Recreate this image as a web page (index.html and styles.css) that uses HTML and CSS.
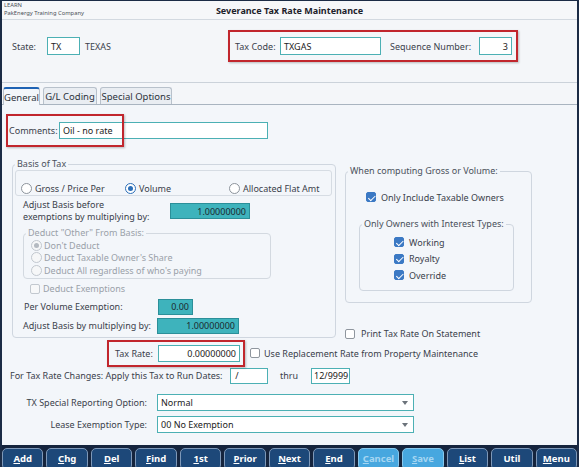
FILE: index.html
```html
<!DOCTYPE html>
<html>
<head>
<meta charset="utf-8">
<link rel="stylesheet" href="styles.css">
</head>
<body>
<div class="window">
  <header class="hdr">
    <div class="company"><div>LEARN</div><div>PakEnergy Training Company</div></div>
    <h1 class="title">Severance Tax Rate Maintenance</h1>
    <div></div>
  </header>

  <section class="keyrow">
    <div class="fg">
      <span class="lbl-state">State:</span>
      <span class="box w33">TX</span>
      <span class="state-name">TEXAS</span>
    </div>
    <div class="fg">
      <span class="lbl-code">Tax Code:</span>
      <span class="box w101">TXGAS</span>
      <span class="lbl-seq">Sequence Number:</span>
      <span class="box w33 num">3</span>
    </div>
  </section>

  <nav class="tabs">
    <span class="tab active w37">General</span>
    <span class="tab w54">G/L Coding</span>
    <span class="tab w72">Special Options</span>
  </nav>

  <main class="panel">
    <div class="row-comments">
      <span class="lbl-comments">Comments:</span>
      <span class="box w209">Oil - no rate</span>
    </div>

    <div class="cols">
      <fieldset class="basis">
        <legend>Basis of Tax</legend>
        <div class="radio-box">
          <span class="opt"><i class="radio"></i>Gross / Price Per</span>
          <span class="opt"><i class="radio on"></i>Volume</span>
          <span class="opt"><i class="radio"></i>Allocated Flat Amt</span>
        </div>
        <div class="adjust-row">
          <span class="lbl-adjust">Adjust Basis before<br>exemptions by multiplying by:</span>
          <span class="box teal w80 num">1.00000000</span>
        </div>
        <fieldset class="deduct">
          <legend>Deduct "Other" From Basis:</legend>
          <div class="dopt"><i class="radio dis on"></i>Don't Deduct</div>
          <div class="dopt"><i class="radio dis"></i>Deduct Taxable Owner's Share</div>
          <div class="dopt"><i class="radio dis"></i>Deduct All regardless of who's paying</div>
        </fieldset>
        <div class="exempt-row"><i class="chk dis"></i>Deduct Exemptions</div>
        <div class="per-row">
          <span class="lbl-per">Per Volume Exemption:</span>
          <span class="box teal w35 num">0.00</span>
        </div>
        <div class="adj2-row">
          <span class="lbl-per">Adjust Basis by multiplying by:</span>
          <span class="box teal w82 num">1.00000000</span>
        </div>
      </fieldset>

      <div class="right">
        <fieldset class="computing">
          <legend>When computing Gross or Volume:</legend>
          <div class="only-row"><i class="chk on"></i>Only Include Taxable Owners</div>
          <fieldset class="owners">
            <legend>Only Owners with Interest Types:</legend>
            <div class="orow"><i class="chk on"></i>Working</div>
            <div class="orow"><i class="chk on"></i>Royalty</div>
            <div class="orow"><i class="chk on"></i>Override</div>
          </fieldset>
        </fieldset>
        <div class="print-row"><i class="chk"></i>Print Tax Rate On Statement</div>
      </div>
    </div>

    <div class="rate-row">
      <span class="lbl-rate">Tax Rate:</span>
      <span class="box w82 num">0.00000000</span>
      <i class="chk gap"></i><span>Use Replacement Rate from Property Maintenance</span>
    </div>

    <div class="dates-row">
      <span class="lbl-dates">For Tax Rate Changes: Apply this Tax to Run Dates:</span>
      <span class="box w38">&nbsp;/</span>
      <span class="lbl-thru">thru</span>
      <span class="box w39">12/9999</span>
    </div>

    <div class="sel-row first">
      <span class="lbl-sel">TX Special Reporting Option:</span>
      <span class="box sel">Normal<i class="caret"></i></span>
    </div>
    <div class="sel-row">
      <span class="lbl-sel">Lease Exemption Type:</span>
      <span class="box sel">00 No Exemption<i class="caret"></i></span>
    </div>
  </main>

  <footer class="btnbar">
    <span class="btn"><u>A</u>dd</span>
    <span class="btn"><u>C</u>hg</span>
    <span class="btn"><u>D</u>el</span>
    <span class="btn"><u>F</u>ind</span>
    <span class="btn"><u>1</u>st</span>
    <span class="btn"><u>P</u>rior</span>
    <span class="btn"><u>N</u>ext</span>
    <span class="btn"><u>E</u>nd</span>
    <span class="btn off"><u>C</u>ancel</span>
    <span class="btn off"><u>S</u>ave</span>
    <span class="btn"><u>L</u>ist</span>
    <span class="btn">Util</span>
    <span class="btn"><u>M</u>enu</span>
  </footer>

  <div class="mark mark-code"></div>
  <div class="mark mark-comments"></div>
  <div class="mark mark-rate"></div>
</div>
</body>
</html>
```

FILE: styles.css
```css
* { box-sizing: border-box; }
html, body { margin: 0; padding: 0; }
body {
  width: 579px; height: 467px; overflow: hidden;
  font-family: "Noto Sans", "Segoe UI", sans-serif;
  font-size: 9px; color: #3a414b;
}
.window {
  position: relative;
  width: 579px; height: 467px;
  background: #1b2b45;
  padding: 1px 2px 0 2px;
  display: flex; flex-direction: column;
  overflow: hidden;
}

/* header */
.hdr {
  height: 19px; flex: none;
  background: #f6f7f9;
  border-bottom: 1px solid #d3d9e0;
  display: grid; grid-template-columns: 1fr auto 1fr; align-items: center;
}
.company { align-self: start; padding: 0 0 0 2px; font-size: 5.8px; line-height: 8px; color: #4a4f57; }
.title { margin: 0; font-size: 9px; font-weight: 700; color: #1d222b; }

/* key row */
.keyrow {
  height: 63px; flex: none;
  background: #f4f6f9;
  border-bottom: 1px solid #cbd2da;
  padding: 17px 0 0 10px;
  display: grid; grid-template-columns: 223px auto; align-items: start;
}
.fg { display: flex; align-items: center; height: 18px; }
.lbl-state { width: 35px; }
.state-name { margin-left: 5px; }
.lbl-code { width: 45px; }
.lbl-seq { margin-left: 9px; width: 89px; }

.box {
  height: 18px; flex: none;
  border: 1px solid #4cb0b4; background: #fff; color: #222;
  padding: 0 3px; display: flex; align-items: center;
  white-space: nowrap;
}
.num { justify-content: flex-end; }
.teal { background: #3eb3bc; border-color: #2b8f99; height: 16px; color: #1d2a30; }
.w33 { width: 33px; } .w35 { width: 35px; } .w38 { width: 38px; } .w39 { width: 39px; }
.w80 { width: 80px; } .w82 { width: 82px; } .w101 { width: 101px; } .w209 { width: 209px; }

/* tabs */
.tabs {
  height: 22px; flex: none;
  display: flex; gap: 3px; align-items: flex-end;
  padding: 0 0 0 1px;
  background: #f4f6f9;
  border-bottom: 1px solid #a9b4c0;
}
.tab {
  height: 17px; font-size: 9.5px; color: #2c323b;
  border: 1px solid #b8c1cb; border-bottom: none;
  border-radius: 3px 3px 0 0;
  background: #e9edf2;
  display: flex; align-items: center; justify-content: center;
}
.tab.active {
  height: 18px; margin-bottom: -1px;
  background: #f3f6fa;
  border-top: 2px solid #1f63b4;
}
.w37 { width: 37px; } .w54 { width: 54px; } .w72 { width: 72px; }

/* panel */
.panel { flex: 1; background: #f3f6fa; }
.row-comments { display: flex; align-items: center; margin-top: 17px; padding-left: 7px; }
.row-comments .box { height: 17px; }
.lbl-comments { width: 50px; }

.cols { display: flex; align-items: flex-start; margin-top: 19px; padding-left: 10px; }

fieldset {
  margin: 0; min-width: 0;
  border: 1px solid #cfd6df; border-radius: 4px;
  padding: 0 0 0 2px;
}
legend { padding: 0 2px; margin: 0; line-height: 12px; font-size: 9px; color: #4a515b; }

.basis { width: 324px; padding: 0 3px 3px 2px; }
.radio-box {
  height: 26px; border: 1px solid #d6dce3; border-radius: 3px;
  padding: 10px 0 0 5px;
  display: grid; grid-template-columns: 104px 104px auto; align-items: center;
}
.opt { display: flex; align-items: center; height: 13px; }

.radio {
  width: 11px; height: 11px; flex: none; border-radius: 50%;
  border: 1px solid #8d949c; background: #fff; margin-right: 3px;
  display: inline-flex; align-items: center; justify-content: center;
}
.radio.on { border-color: #2c6fb8; }
.radio.on::after { content: ""; width: 5px; height: 5px; border-radius: 50%; background: #2c6fb8; }
.radio.dis { border-color: #c2c8cf; background: #f6f7f8; margin-right: 2px; }
.radio.dis.on::after { background: #b4bac1; }

.adjust-row { display: flex; align-items: center; margin: 3px 0 0 8px; }
.lbl-adjust { width: 147px; line-height: 12px; }

.deduct { width: 248px; margin: 4px 0 0 8px; padding: 0 0 1px 2px; border-color: #d3d9e0; }
.deduct legend { color: #9aa1a9; }
.dopt { height: 12.5px; display: flex; align-items: center; margin-left: 5px; color: #9aa1a9; }

.exempt-row { height: 12px; display: flex; align-items: center; margin: 4px 0 0 15px; color: #9aa1a9; }

.per-row { display: flex; align-items: center; margin: 4px 0 0 9px; }
.adj2-row { display: flex; align-items: center; margin: 3px 0 0 8px; }
.lbl-per { width: 134px; }

.chk {
  width: 10px; height: 10px; flex: none;
  border: 1px solid #8f969e; border-radius: 2px; background: #fff;
  margin-right: 5px; position: relative;
}
.chk.dis { border-color: #c2c8cf; background: #f7f8f9; margin-right: 3px; }
.chk.on { background: #3b79c4; border-color: #3b79c4; }
.chk.on::after {
  content: ""; position: absolute; left: 2.5px; top: 0.5px;
  width: 3px; height: 5.5px;
  border: solid #fff; border-width: 0 1.5px 1.5px 0;
  transform: rotate(45deg);
}

.right { margin-left: 9px; width: 187px; display: flex; flex-direction: column; }
.computing { margin-top: 7px; padding: 0 0 11px 2px; }
.only-row { height: 16px; display: flex; align-items: center; margin: 12px 0 0 18px; }
.owners { width: 155px; margin: 13px 0 0 11px; padding: 0 0 6px 2px; }
.orow { height: 16.5px; display: flex; align-items: center; margin-left: 32px; }
.orow:first-of-type { margin-top: 4px; }
.print-row { height: 12px; display: flex; align-items: center; margin-top: 25px; }
.print-row .chk { margin-right: 6px; }

.rate-row { display: flex; align-items: center; margin-top: 5px; padding-left: 113px; }
.lbl-rate { width: 43px; }
.rate-row .box { height: 17px; }
.chk.gap { margin-left: 10px; margin-right: 4px; }

.dates-row { display: flex; align-items: center; margin-top: 6px; padding-left: 8px; }
.dates-row .box { height: 16px; padding: 0 2px; }
.lbl-dates { width: 220px; }
.lbl-thru { margin-left: 12px; width: 31px; }

.sel-row { display: flex; align-items: center; margin-top: 5px; }
.sel-row.first { margin-top: 10px; }
.lbl-sel { width: 145px; text-align: right; margin-right: 10px; }
.sel { width: 257px; height: 17px; position: relative; }
.caret {
  position: absolute; right: 5px; top: 6px;
  border-left: 3.5px solid transparent; border-right: 3.5px solid transparent;
  border-top: 4px solid #6c737b;
}

/* buttons */
.btnbar {
  height: 22px; flex: none;
  display: flex; gap: 3px;
  padding-top: 3px;
  background: #15243d;
}
.btn {
  flex: 1; height: 22px;
  background: #1d4879;
  border: 1px solid #7e98b8; border-radius: 5px;
  color: #fff; font-weight: 700; font-size: 9.5px;
  display: flex; justify-content: center; padding-top: 3px;
}
.btn u { text-decoration-thickness: 1px; text-underline-offset: 1px; }
.btn.off { background: #47a7df; border-color: #88c8ec; color: #a5d6f2; }

/* annotation marks */
.mark {
  position: absolute;
  border: 2px solid #c1262d;
  box-shadow: 1px 1px 2px rgba(0,0,0,0.25);
  pointer-events: none;
}
.mark-code { left: 228px; top: 30px; width: 290px; height: 32px; }
.mark-comments { left: 6px; top: 114px; width: 118px; height: 33px; }
.mark-rate { left: 107px; top: 340px; width: 138px; height: 27px; }
```
